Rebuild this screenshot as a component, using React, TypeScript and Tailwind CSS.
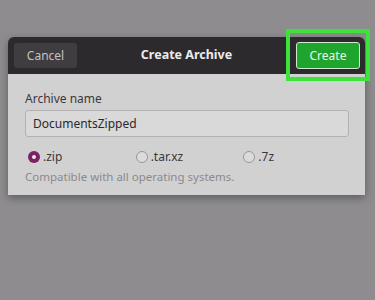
import React, { useState } from 'react';

const formats = [
  { id: 'zip', label: '.zip' },
  { id: 'tarxz', label: '.tar.xz' },
  { id: '7z', label: '.7z' },
];

function Radio({ checked }: { checked: boolean }) {
  if (checked) {
    return (
      <span className="flex h-[12px] w-[12px] items-center justify-center rounded-full bg-[#7a2065]">
        <span className="h-[4px] w-[4px] rounded-full bg-[#f0e6ee]" />
      </span>
    );
  }
  return <span className="h-[12px] w-[12px] rounded-full border border-[#9a989a] bg-[#dcdbdc]" />;
}

export default function App() {
  const [format, setFormat] = useState('zip');
  const [name, setName] = useState('DocumentsZipped');

  return (
    <div
      className="relative h-[300px] w-[375px] overflow-hidden bg-[#8e8c8f] pt-[37px] pl-[8px]"
      style={{ fontFamily: '"Noto Sans", "DejaVu Sans", sans-serif' }}
    >
      <div className="w-[357px] overflow-hidden rounded-t-[6px] shadow-[0_3px_8px_rgba(0,0,0,0.35)]">
        <div className="flex h-[37px] items-center justify-between bg-[#2c2a2c] pl-[6px] pr-[5px]">
          <button className="h-[25px] w-[63px] rounded-[3px] bg-[#3f3d3f] text-[12px] text-[#c4c2c4]">
            Cancel
          </button>
          <span className="text-[12.5px] font-bold text-[#ecebec]">Create Archive</span>
          <button className="h-[27px] w-[64px] rounded-[3px] border border-[#cfe9cf] bg-[#1fa52e] text-[12px] text-[#e8f6e8]">
            Create
          </button>
        </div>
        <div className="bg-[#d2d1d2] px-[17px] pt-[17px] pb-[10px]">
          <div className="text-[12px] leading-[16px] text-[#3a383a]">Archive name</div>
          <input
            value={name}
            onChange={(e) => setName(e.target.value)}
            className="mt-[3px] h-[27px] w-[324px] rounded-[3px] border border-[#b3b1b3] bg-[#dad9da] px-[7px] text-[12px] text-[#2a282a] outline-none"
          />
          <div className="mt-[12px] grid grid-cols-3">
            {formats.map((f) => (
              <label
                key={f.id}
                className="flex cursor-pointer items-center gap-[3px] pl-[3px] text-[12px] leading-[16px] text-[#3a383a]"
                onClick={() => setFormat(f.id)}
              >
                <Radio checked={format === f.id} />
                {f.label}
              </label>
            ))}
          </div>
          <div className="mt-[4px] text-[11.5px] leading-[16px] text-[#8b898b]">
            Compatible with all operating systems.
          </div>
        </div>
      </div>
      <div className="pointer-events-none absolute top-[29px] left-[286px] h-[52px] w-[84px] border-[4px] border-[#3de33a]" />
    </div>
  );
}
